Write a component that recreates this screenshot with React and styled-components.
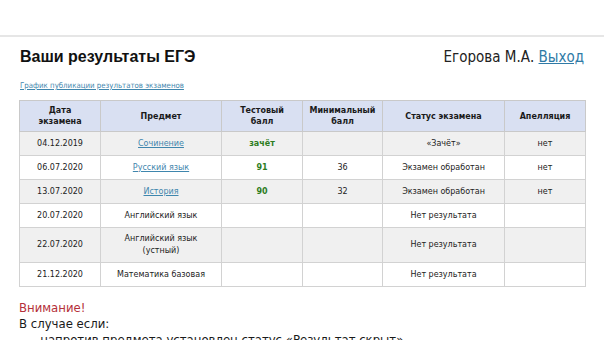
import React from 'react';
import styled, { createGlobalStyle } from 'styled-components';

const GlobalStyle = createGlobalStyle`
  body {
    margin: 0;
    background: #ffffff;
    font-family: 'DejaVu Sans Condensed', 'DejaVu Sans', sans-serif;
    color: #1a1a1a;
  }
`

const Page = styled.div`
  padding-top: 35px;
`
const TopRule = styled.div`
  height: 2px;
  background-color: #e6e6e6;
`
const Content = styled.div`
  padding: 0 19px 0 19px;
`
const Header = styled.div`
  display: flex;
  justify-content: space-between;
  align-items: flex-end;
  height: 29px;
`
const Title = styled.h1`
  margin: 0 0 0 1px;
  font-family: 'Liberation Sans', Arial, sans-serif;
  font-size: 16px;
  font-weight: bold;
  color: #111;
`
const User = styled.div`
  font-size: 15px;
  color: #222;
  padding-right: 1px;
`
const Link = styled.a`
  color: ${props => props.strong ? '#2f7aa6' : '#3f86ad'};
  text-decoration: underline;
  cursor: pointer;
`
const ScheduleLink = styled.div`
  margin: 15px 0 0 1px;
  font-size: 7.8px;
  height: 19px;
`
const Table = styled.table`
  border-collapse: collapse;
  width: 566px;
  table-layout: fixed;
  font-family: 'DejaVu Sans', sans-serif;
  font-size: 8px;
  color: #222;
`
const Th = styled.th`
  background-color: #d9e0f2;
  border: 1px solid #c9c9c9;
  height: 30px;
  font-weight: bold;
  line-height: 11px;
  padding: 0 2px;
  color: #1a1a1a;
`
const Row = styled.tr`
  background-color: ${props => props.odd ? '#f0f0f0' : '#ffffff'};
`
const Td = styled.td`
  border: 1px solid #d2d2d2;
  text-align: center;
  height: ${props => props.tall ? '34px' : '23px'};
  line-height: 12px;
  padding: 0 2px;
  color: ${props => props.score ? '#2e7d1e' : '#222'};
  font-weight: ${props => props.score ? 'bold' : 'normal'};
`
const Notice = styled.div`
  margin-top: 13px;
  font-size: 13px;
  line-height: 16px;
`
const Warning = styled.div`
  color: #b5303a;
`
const List = styled.ul`
  margin: 0;
  padding-left: 8px;
  list-style: none;
`
const Item = styled.li`
  white-space: nowrap;
`

const rows = [
  { date: '04.12.2019', subject: 'Сочинение', link: true, score: 'зачёт', min: '', status: '«Зачёт»', appeal: 'нет' },
  { date: '06.07.2020', subject: 'Русский язык', link: true, score: '91', min: '36', status: 'Экзамен обработан', appeal: 'нет' },
  { date: '13.07.2020', subject: 'История', link: true, score: '90', min: '32', status: 'Экзамен обработан', appeal: 'нет' },
  { date: '20.07.2020', subject: 'Английский язык', score: '', min: '', status: 'Нет результата', appeal: '' },
  { date: '22.07.2020', subject: 'Английский язык (устный)', tall: true, score: '', min: '', status: 'Нет результата', appeal: '' },
  { date: '21.12.2020', subject: 'Математика базовая', score: '', min: '', status: 'Нет результата', appeal: '' },
]

const App = () => {
  return (
    <Page>
      <GlobalStyle />
      <TopRule />
      <Content>
        <Header>
          <Title>Ваши результаты ЕГЭ</Title>
          <User>Егорова М.А. <Link strong>Выход</Link></User>
        </Header>
        <ScheduleLink><Link>График публикации результатов экзаменов</Link></ScheduleLink>
        <Table>
          <colgroup>
            <col style={{ width: 81 }} />
            <col style={{ width: 121 }} />
            <col style={{ width: 81 }} />
            <col style={{ width: 80 }} />
            <col style={{ width: 122 }} />
            <col style={{ width: 81 }} />
          </colgroup>
          <thead>
            <tr>
              <Th>Дата<br />экзамена</Th>
              <Th>Предмет</Th>
              <Th>Тестовый<br />балл</Th>
              <Th>Минимальный<br />балл</Th>
              <Th>Статус экзамена</Th>
              <Th>Апелляция</Th>
            </tr>
          </thead>
          <tbody>
            {rows.map((row, i) => (
              <Row key={i} odd={i % 2 === 0}>
                <Td tall={row.tall}>{row.date}</Td>
                <Td tall={row.tall}>{row.link ? <Link>{row.subject}</Link> : row.tall ? <>Английский язык<br />(устный)</> : row.subject}</Td>
                <Td tall={row.tall} score>{row.score}</Td>
                <Td tall={row.tall}>{row.min}</Td>
                <Td tall={row.tall}>{row.status}</Td>
                <Td tall={row.tall}>{row.appeal}</Td>
              </Row>
            ))}
          </tbody>
        </Table>
        <Notice>
          <Warning>Внимание!</Warning>
          <div>В случае если:</div>
          <List>
            <Item>–&nbsp;&nbsp;напротив предмета установлен статус «Результат скрыт»,</Item>
          </List>
        </Notice>
      </Content>
    </Page>
  )
}

export default App;
